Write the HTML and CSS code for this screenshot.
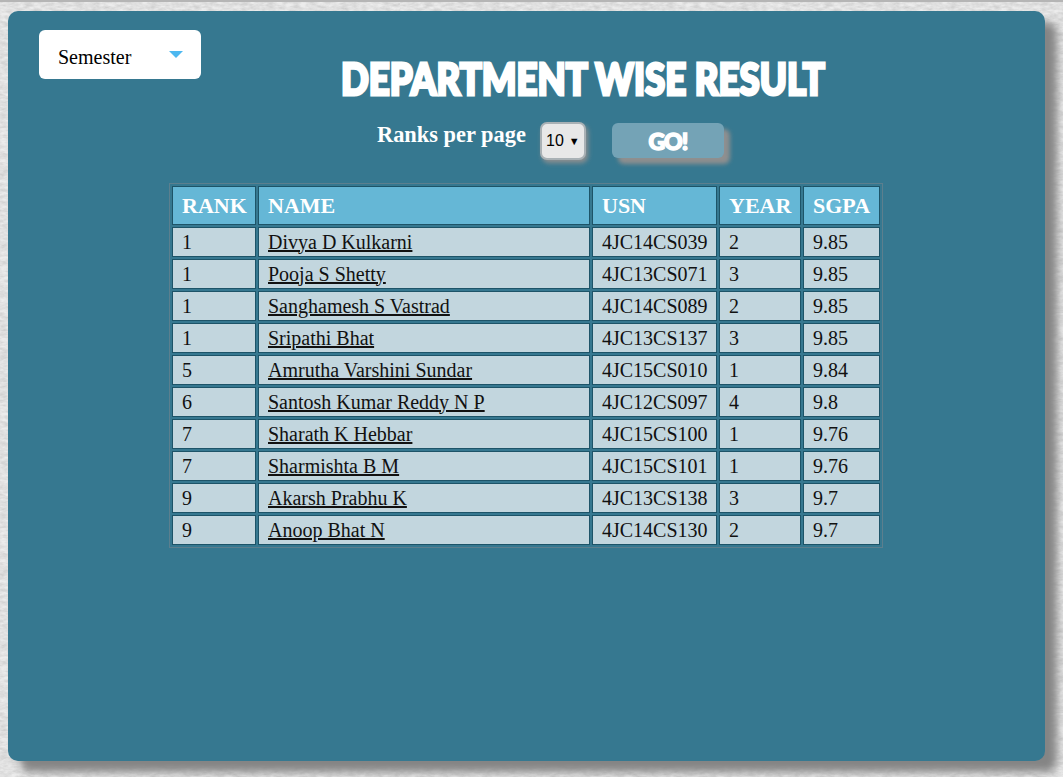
FILE: index.html
```html
<!DOCTYPE html>
<html lang="en">
<head>
<meta charset="utf-8">
<title>Department Wise Result</title>
<link rel="stylesheet" href="styles.css">
</head>
<body>
<main class="panel">
  <div class="top">
    <div class="dropdown"><span>Semester</span><i class="caret"></i></div>
    <h1 class="title">Department Wise Result</h1>
  </div>
  <form class="controls">
    <label class="ranks-label">Ranks per page</label>
    <div class="select"><span>10</span><b>▼</b></div>
    <button class="go" type="button">GO!</button>
  </form>
  <table class="results">
    <colgroup><col class="c1"><col class="c2"><col class="c3"><col class="c4"><col class="c5"></colgroup>
    <thead><tr><th>RANK</th><th>NAME</th><th>USN</th><th>YEAR</th><th>SGPA</th></tr></thead>
    <tbody>
      <tr><td>1</td><td><a href="#">Divya D Kulkarni</a></td><td>4JC14CS039</td><td>2</td><td>9.85</td></tr>
      <tr><td>1</td><td><a href="#">Pooja S Shetty</a></td><td>4JC13CS071</td><td>3</td><td>9.85</td></tr>
      <tr><td>1</td><td><a href="#">Sanghamesh S Vastrad</a></td><td>4JC14CS089</td><td>2</td><td>9.85</td></tr>
      <tr><td>1</td><td><a href="#">Sripathi Bhat</a></td><td>4JC13CS137</td><td>3</td><td>9.85</td></tr>
      <tr><td>5</td><td><a href="#">Amrutha Varshini Sundar</a></td><td>4JC15CS010</td><td>1</td><td>9.84</td></tr>
      <tr><td>6</td><td><a href="#">Santosh Kumar Reddy N P</a></td><td>4JC12CS097</td><td>4</td><td>9.8</td></tr>
      <tr><td>7</td><td><a href="#">Sharath K Hebbar</a></td><td>4JC15CS100</td><td>1</td><td>9.76</td></tr>
      <tr><td>7</td><td><a href="#">Sharmishta B M</a></td><td>4JC15CS101</td><td>1</td><td>9.76</td></tr>
      <tr><td>9</td><td><a href="#">Akarsh Prabhu K</a></td><td>4JC13CS138</td><td>3</td><td>9.7</td></tr>
      <tr><td>9</td><td><a href="#">Anoop Bhat N</a></td><td>4JC14CS130</td><td>2</td><td>9.7</td></tr>
    </tbody>
  </table>
</main>
</body>
</html>
```
FILE: styles.css
```css
* { box-sizing: border-box; }
html, body { height: 100%; }
body {
  margin: 0;
  padding: 9px 18px 0 8px;
  height: 777px;
  overflow: hidden;
  border-top: 2px solid #b5b5b5;
  font-family: "Liberation Serif", serif;
  background-color: #ececec;
  background-image: url("data:image/svg+xml,%3Csvg xmlns='http://www.w3.org/2000/svg' width='400' height='400'%3E%3Cfilter id='n'%3E%3CfeTurbulence type='fractalNoise' baseFrequency='.12 .3' numOctaves='3' seed='4'/%3E%3CfeColorMatrix values='0 0 0 0 .5 0 0 0 0 .5 0 0 0 0 .5 1 0 0 0 -.25'/%3E%3C/filter%3E%3Crect width='400' height='400' filter='url(%23n)'/%3E%3C/svg%3E");
}
.panel {
  height: 750px;
  padding: 19px 0 0;
  background: #367890;
  border-radius: 10px;
  box-shadow: 12px 11px 9px #858585;
}
.top { display: flex; align-items: flex-start; padding-left: 31px; height: 92px; }
.dropdown {
  width: 162px;
  height: 49px;
  padding: 0 18px 0 19px;
  display: flex;
  align-items: center;
  justify-content: space-between;
  background: #fff;
  border-radius: 6px;
  font-size: 20px;
  color: #000;
}
.dropdown span { padding-top: 5px; }
.caret {
  width: 0;
  height: 0;
  border-left: 7px solid transparent;
  border-right: 7px solid transparent;
  border-top: 7px solid #4db8f0;
}
.title {
  margin: 30px 0 0 140px;
  white-space: nowrap;
  font-family: "Lato", sans-serif;
  font-weight: 900;
  font-size: 43px;
  line-height: 37px;
  text-transform: uppercase;
  color: #fff;
  -webkit-text-stroke: 3px #fff;
  transform: scaleX(0.85);
  transform-origin: left center;
}
.controls { display: flex; align-items: flex-start; padding-left: 369px; height: 61px; }
.ranks-label { font-size: 22.4px; font-weight: 700; color: #fff; line-height: 25px; }
.select {
  width: 46px;
  height: 38px;
  margin: 0 26px 0 14px;
  display: flex;
  align-items: center;
  justify-content: center;
  gap: 5px;
  background: #e8e8e8;
  border: 2px solid #a9b1b5;
  border-radius: 7px;
  box-shadow: 2px 3px 5px #8f8f8f;
  font-family: "Liberation Sans", sans-serif;
  font-size: 16px;
  color: #000;
}
.select b { font-size: 11px; font-weight: 400; }
.go {
  width: 112px;
  height: 35px;
  margin-top: 1px;
  padding: 0;
  border: 0;
  background: #74a3b6;
  border-radius: 6px;
  box-shadow: 6px 6px 4px #8f8f8f;
  font-family: "Lato", sans-serif;
  font-weight: 900;
  font-size: 23px;
  letter-spacing: -1px;
  color: #fff;
  -webkit-text-stroke: 1.5px #fff;
}
.results {
  table-layout: fixed;
  width: 714px;
  margin: 0 0 0 161px;
  border: 1px solid #5c7f8e;
  border-spacing: 2px;
  border-collapse: separate;
  font-size: 20px;
  color: #111;
}
.c1 { width: 84px; } .c2 { width: 332px; } .c3 { width: 125px; } .c4 { width: 82px; } .c5 { width: 77px; }
.results th, .results td { border: 1px solid #1d5468; padding: 0 9px; text-align: left; }
.results th { height: 39px; background: #65b7d6; color: #fff; font-size: 22px; font-weight: 700; }
.results td { height: 30px; background: #c2d6de; }
.results a { color: #111; text-decoration: underline; text-decoration-thickness: 2px; }
```
